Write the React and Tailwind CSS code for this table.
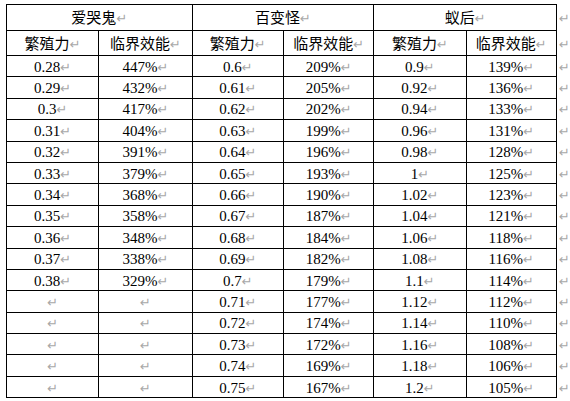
import React from 'react';

const groups = [
  {
    name: '爱哭鬼',
    rows: [
      ['0.28', '447%'], ['0.29', '432%'], ['0.3', '417%'], ['0.31', '404%'],
      ['0.32', '391%'], ['0.33', '379%'], ['0.34', '368%'], ['0.35', '358%'],
      ['0.36', '348%'], ['0.37', '338%'], ['0.38', '329%'],
      ['', ''], ['', ''], ['', ''], ['', ''], ['', ''],
    ],
  },
  {
    name: '百变怪',
    rows: [
      ['0.6', '209%'], ['0.61', '205%'], ['0.62', '202%'], ['0.63', '199%'],
      ['0.64', '196%'], ['0.65', '193%'], ['0.66', '190%'], ['0.67', '187%'],
      ['0.68', '184%'], ['0.69', '182%'], ['0.7', '179%'], ['0.71', '177%'],
      ['0.72', '174%'], ['0.73', '172%'], ['0.74', '169%'], ['0.75', '167%'],
    ],
  },
  {
    name: '蚁后',
    rows: [
      ['0.9', '139%'], ['0.92', '136%'], ['0.94', '133%'], ['0.96', '131%'],
      ['0.98', '128%'], ['1', '125%'], ['1.02', '123%'], ['1.04', '121%'],
      ['1.06', '118%'], ['1.08', '116%'], ['1.1', '114%'], ['1.12', '112%'],
      ['1.14', '110%'], ['1.16', '108%'], ['1.18', '106%'], ['1.2', '105%'],
    ],
  },
];

// Word paragraph mark
const Mark = () => (
  <span className="text-[13px] text-[#a8a8a8] font-['DejaVu_Sans',sans-serif] align-[0px]">↵</span>
);

const Cell = ({ children, colSpan }) => (
  <td colSpan={colSpan} className="border border-black p-0 pt-[2px] text-center whitespace-nowrap">
    {children}
    <Mark />
  </td>
);

const EndMark = () => (
  <td className="p-0 pl-[2px] pt-[2px] text-left">
    <Mark />
  </td>
);

export default function App() {
  const rowCount = groups[0].rows.length;

  return (
    <div className="w-[570px] h-[401px] bg-white overflow-hidden pt-[4px] pl-[6px]">
      <table className="border-collapse table-fixed text-[15px] leading-none text-black font-['Liberation_Serif','Noto_Sans_CJK_SC',serif]">
        <colgroup>
          <col className="w-[93px]" />
          <col className="w-[94px]" />
          <col className="w-[92px]" />
          <col className="w-[91px]" />
          <col className="w-[93px]" />
          <col className="w-[91px]" />
          <col className="w-[12px]" />
        </colgroup>
        <tbody>
          <tr className="h-[26px]">
            {groups.map((g) => (
              <Cell key={g.name} colSpan={2}>{g.name}</Cell>
            ))}
            <EndMark />
          </tr>
          <tr className="h-[25px]">
            {groups.map((g) => (
              <React.Fragment key={g.name}>
                <Cell>繁殖力</Cell>
                <Cell>临界效能</Cell>
              </React.Fragment>
            ))}
            <EndMark />
          </tr>
          {Array.from({ length: rowCount }).map((_, i) => (
            <tr key={i} className="h-[21.4px]">
              {groups.map((g) => (
                <React.Fragment key={g.name}>
                  <Cell>{g.rows[i][0]}</Cell>
                  <Cell>{g.rows[i][1]}</Cell>
                </React.Fragment>
              ))}
              <EndMark />
            </tr>
          ))}
        </tbody>
      </table>
    </div>
  );
}
